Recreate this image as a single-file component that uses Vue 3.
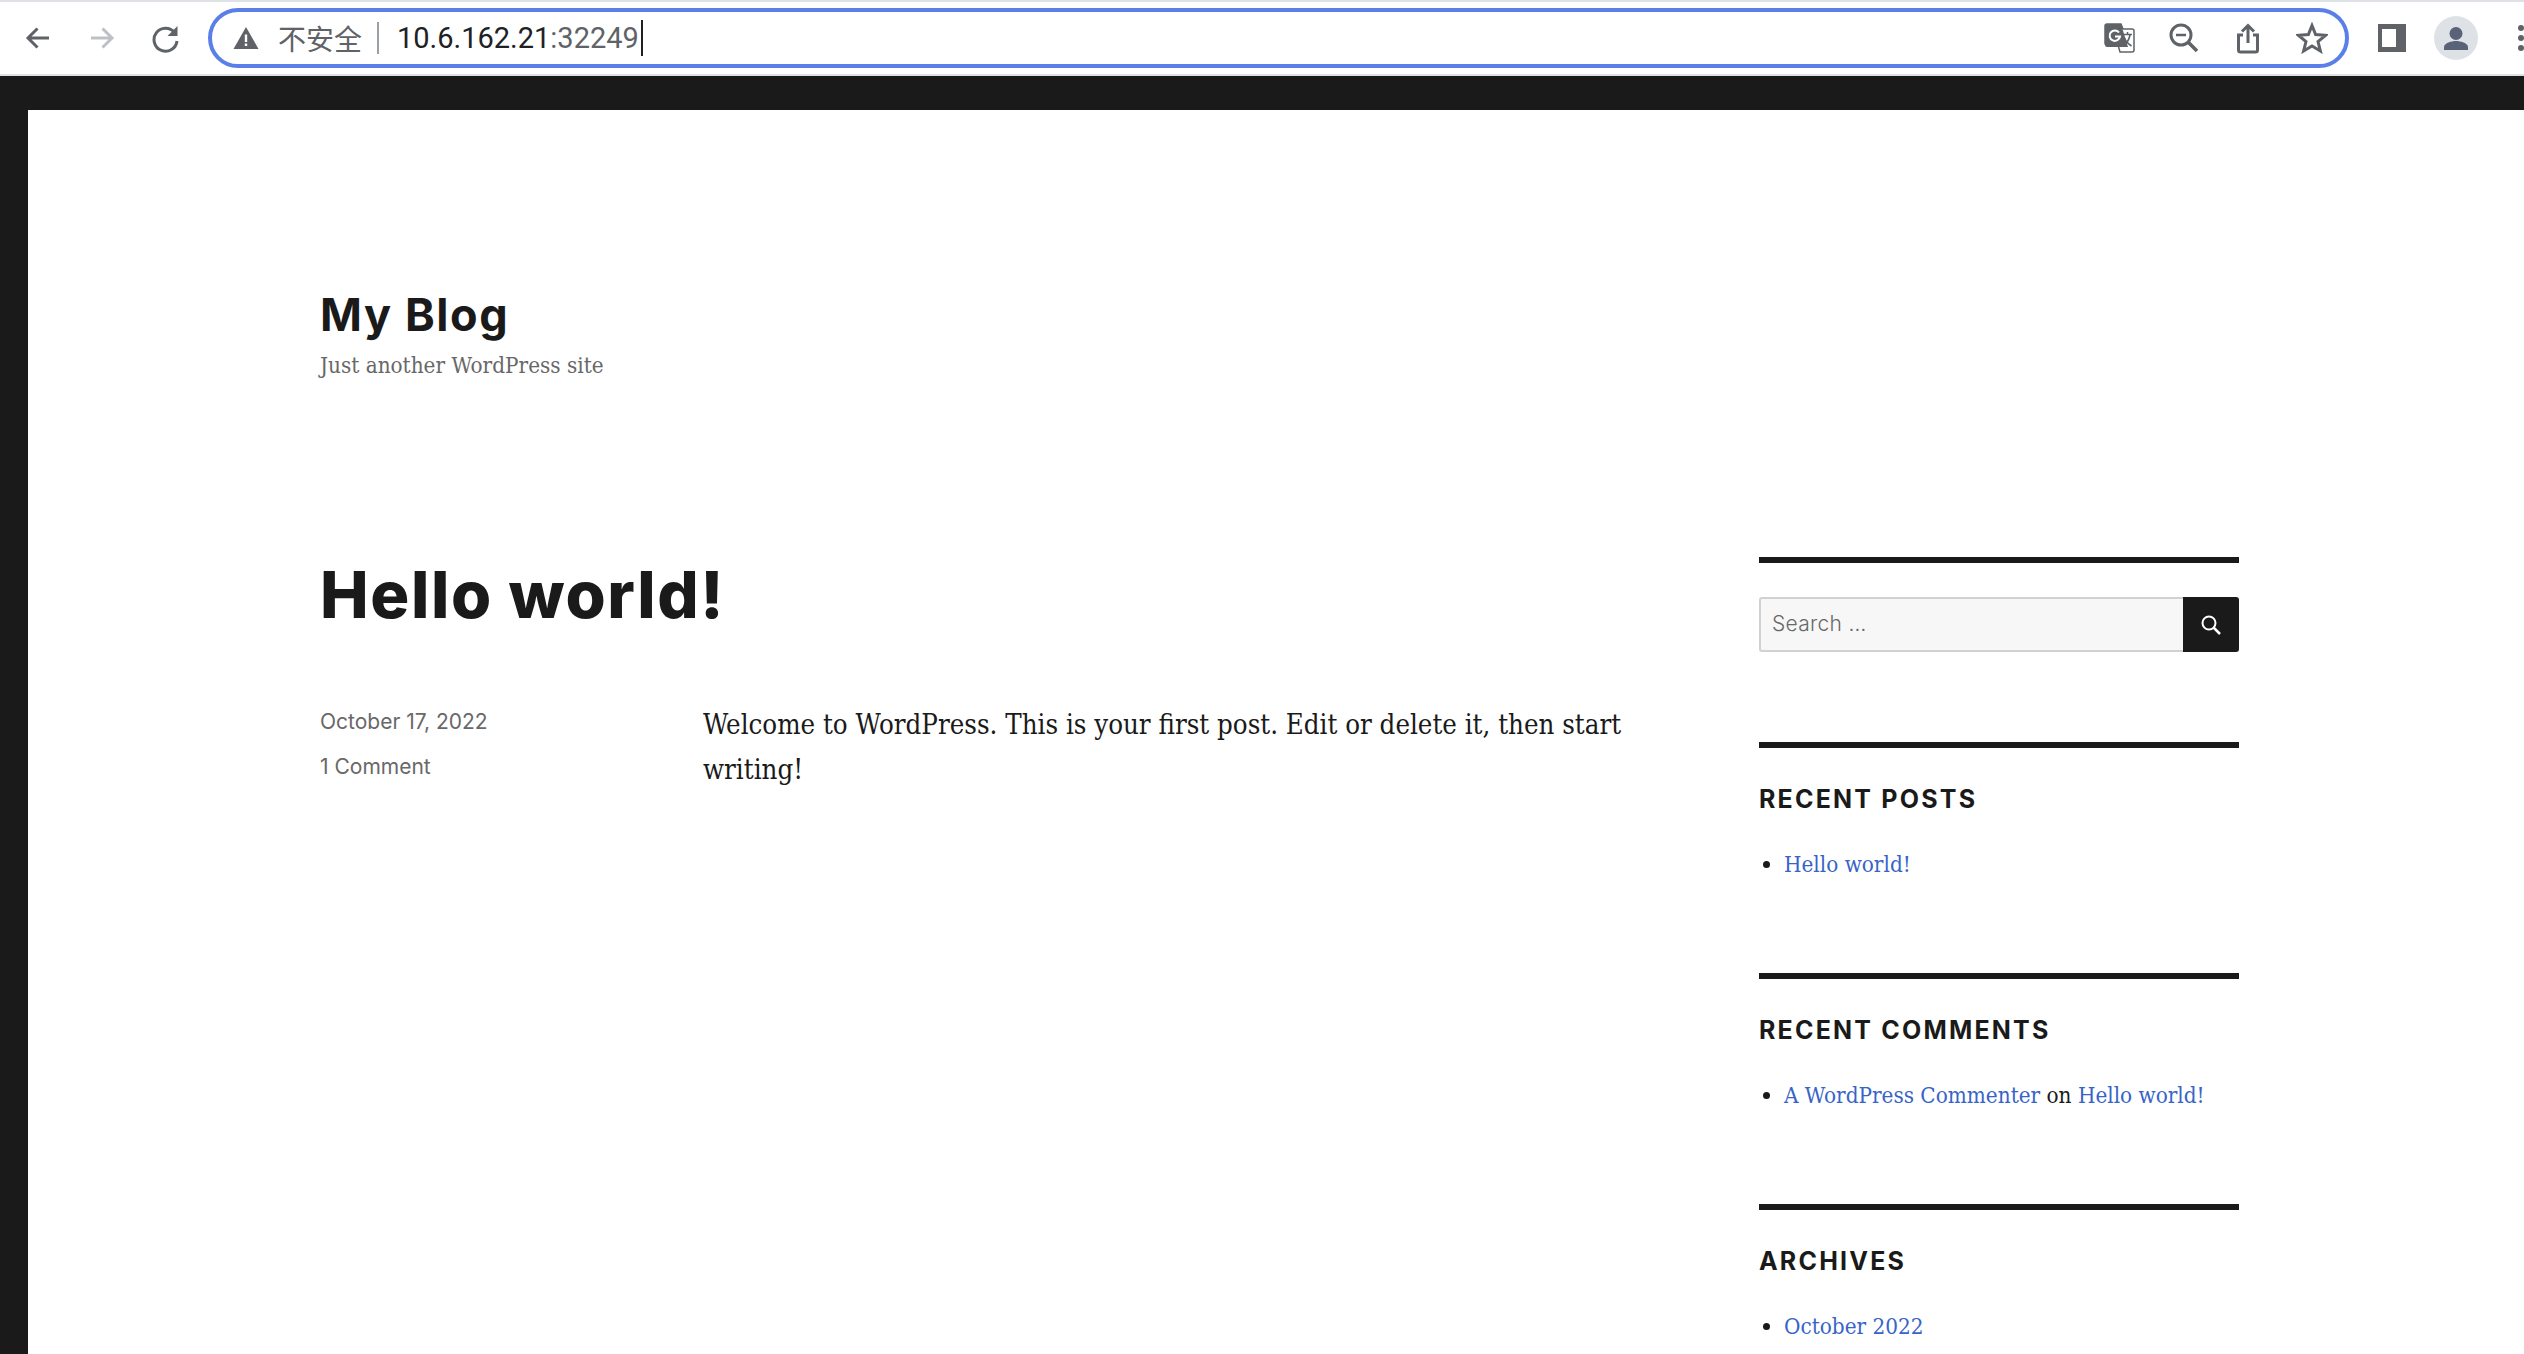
<template>
  <div class="page">
    <header class="toolbar">
      <button class="nav-btn">
        <svg viewBox="0 0 32 32" width="32" height="32"><path d="M27 16H7M15.500 6.500 6 16l9.500 9.500" fill="none" stroke="#5f6368" stroke-width="3"/></svg>
      </button>
      <button class="nav-btn">
        <svg viewBox="0 0 32 32" width="32" height="32"><path d="M5 16h20M16.500 6.500 26 16l-9.500 9.500" fill="none" stroke="#bdc1c6" stroke-width="3"/></svg>
      </button>
      <button class="nav-btn">
        <svg viewBox="0 0 32 32" width="32" height="32"><path d="M24.500 10.500A11.500 11.500 0 1 0 27 19" fill="none" stroke="#5f6368" stroke-width="3"/><path d="M27.500 4v10h-10z" fill="#5f6368"/></svg>
      </button>
      <div class="omnibox">
        <svg class="warn" viewBox="0 0 26 24" width="26" height="24"><path d="M13 1 25.500 23H.5z" fill="#5f6368"/><path d="M11.800 8.500h2.400v7.500h-2.400zM11.800 17.500h2.400v2.500h-2.400z" fill="#fff"/></svg>
        <span class="insecure">不安全</span>
        <span class="divider"></span>
        <span class="url">10.6.162.21<span class="port">:32249</span></span>
        <span class="caret"></span>
        <div class="omni-icons">
          <svg viewBox="0 0 32 32" width="32" height="32">
            <path d="M3 2h14l2 5h9a2 2 0 0 1 2 2v19a2 2 0 0 1-2 2H16l-2-7H3a2 2 0 0 1-2-2V4a2 2 0 0 1 2-2z" fill="#fff" stroke="#5f6368" stroke-width="1.500"/>
            <path d="M3 2h14l7 23H3a2 2 0 0 1-2-2V4a2 2 0 0 1 2-2z" fill="#5f6368"/>
            <path d="M15 10.500a5.200 5.200 0 1 0 1 4h-5" fill="none" stroke="#fff" stroke-width="2"/>
            <path d="M19 12.500h9M23.500 10v2.500M26 13c-1 5-4 9-7 11M20.500 16c1 3 4 6 7 8" fill="none" stroke="#5f6368" stroke-width="1.600"/>
          </svg>
          <svg viewBox="0 0 32 32" width="32" height="32"><circle cx="13" cy="13" r="10" fill="none" stroke="#5f6368" stroke-width="3"/><path d="M8 13h10" stroke="#5f6368" stroke-width="2.500"/><path d="M20.500 20.500 29 29" stroke="#5f6368" stroke-width="3.500"/></svg>
          <svg viewBox="0 0 32 32" width="32" height="32"><path d="M16 21V4M10 9.500 16 3.500l6 6" fill="none" stroke="#5f6368" stroke-width="3"/><path d="M11 13H6.500v15a2 2 0 0 0 2 2h15a2 2 0 0 0 2-2V13H21" fill="none" stroke="#5f6368" stroke-width="3"/></svg>
          <svg viewBox="0 0 32 32" width="32" height="32"><path d="M16 3.500 19.600 12.500 29.500 13.300 22 19.600 24.400 29 16 24 7.600 29 10 19.600 2.500 13.300 12.400 12.500z" fill="none" stroke="#5f6368" stroke-width="3" stroke-linejoin="miter"/></svg>
        </div>
      </div>
      <span class="side-panel"></span>
      <span class="avatar">
        <svg viewBox="0 0 44 44" width="44" height="44"><circle cx="22" cy="17.500" r="6.500" fill="#5a6278"/><path d="M10 34v-3c0-4 8-6 12-6s12 2 12 6v3z" fill="#5a6278"/></svg>
      </span>
      <span class="kebab"><i></i><i></i><i></i></span>
    </header>

    <div class="frame">
      <div class="site">
        <div class="branding">
          <h1 class="site-title">My Blog</h1>
          <p class="tagline">Just another WordPress site</p>
        </div>

        <div class="columns">
          <main class="content">
            <h2 class="post-title">Hello world!</h2>
            <div class="post-row">
              <div class="meta">
                <div>October 17, 2022</div>
                <div>1 Comment</div>
              </div>
              <p class="post-body">Welcome to WordPress. This is your first post. Edit or delete it, then start writing!</p>
            </div>
          </main>

          <aside class="sidebar">
            <section class="widget search-widget">
              <form class="search" @submit.prevent>
                <div class="search-input">Search …</div>
                <button class="search-btn">
                  <svg viewBox="0 0 22 22" width="22" height="22"><circle cx="9" cy="9" r="6.500" fill="none" stroke="#fff" stroke-width="2"/><path d="M13.500 13.500 20 20" stroke="#fff" stroke-width="2.500"/></svg>
                </button>
              </form>
            </section>

            <section class="widget" v-for="w in widgets" :key="w.title">
              <h3 class="widget-title">{{ w.title }}</h3>
              <ul>
                <li v-for="(item, i) in w.items" :key="i">
                  <template v-for="(part, j) in item" :key="j">
                    <a v-if="part.link">{{ part.text }}</a>
                    <span v-else>{{ part.text }}</span>
                  </template>
                </li>
              </ul>
            </section>
          </aside>
        </div>
      </div>
    </div>
  </div>
</template>

<script setup>
const widgets = [
  { title: 'RECENT POSTS', items: [[{ text: 'Hello world!', link: true }]] },
  {
    title: 'RECENT COMMENTS',
    items: [[
      { text: 'A WordPress Commenter', link: true },
      { text: ' on ' },
      { text: 'Hello world!', link: true }
    ]]
  },
  { title: 'ARCHIVES', items: [[{ text: 'October 2022', link: true }]] }
]
</script>

<style>
html, body {
  margin: 0;
  height: 100%;
  overflow: hidden;
  background: #1a1a1a;
}
</style>

<style scoped>
* { box-sizing: border-box; }

.page {
  width: 2524px;
  height: 1354px;
  overflow: hidden;
  font-family: Inter, sans-serif;
  display: flex;
  flex-direction: column;
}

/* Browser chrome */
.toolbar {
  height: 76px;
  flex: none;
  background: #fff;
  border-top: 2px solid #dee1e6;
  border-bottom: 2px solid #dee1e6;
  display: flex;
  align-items: center;
  padding-left: 18px;
  gap: 24px;
  overflow: hidden;
}

.nav-btn {
  width: 40px;
  height: 40px;
  border: none;
  background: none;
  padding: 0;
  display: flex;
  align-items: center;
  justify-content: center;
}

.omnibox {
  width: 2141px;
  height: 60px;
  margin-left: -2px;
  flex: none;
  border: 4px solid #5a7fe8;
  border-radius: 30px;
  display: flex;
  align-items: center;
  padding-left: 21px;
}

.warn { flex: none; }

.insecure {
  margin-left: 19px;
  font: 28px "Noto Sans CJK SC", sans-serif;
  color: #5f6368;
}

.divider {
  width: 2px;
  height: 32px;
  background: #9aa0a6;
  margin: 0 18px 0 15px;
}

.url {
  font: 29px Roboto, sans-serif;
  color: #202124;
}

.port { color: #5f6368; }

.caret {
  width: 2px;
  height: 36px;
  background: #202124;
  margin-left: 2px;
}

.omni-icons {
  margin-left: auto;
  margin-right: 17px;
  display: flex;
  gap: 32px;
}

.side-panel {
  width: 28px;
  height: 28px;
  flex: none;
  margin-left: 5px;
  border: solid #5f6368;
  border-width: 5px 10px 5px 4px;
}

.avatar {
  width: 44px;
  height: 44px;
  flex: none;
  border-radius: 50%;
  background: #dee1e6;
  margin-left: 4px;
}

.avatar svg { display: block; }

.kebab {
  display: flex;
  flex-direction: column;
  gap: 4px;
  margin-left: 16px;
}

.kebab i {
  display: block;
  width: 6px;
  height: 6px;
  border-radius: 50%;
  background: #5f6368;
}

/* WordPress page */
.frame {
  flex: 1;
  min-height: 0;
  background: #1a1a1a;
  padding: 34px 0 0 28px;
}

.site {
  height: 100%;
  background: #fff;
  padding: 177px 285px 0 292px;
  color: #1a1a1a;
}

.branding { height: 263px; }

.site-title {
  margin: 0;
  font: 700 45px/56px Inter, sans-serif;
  letter-spacing: 1.600px;
}

.tagline {
  margin: 7px 0 0;
  font: 22.300px/30px "DejaVu Serif Condensed", "DejaVu Serif", serif;
  color: #686868;
}

.columns {
  display: flex;
  justify-content: space-between;
}

.content { width: 1325px; }

.post-title {
  margin: 0;
  font: 800 65px/90px Inter, sans-serif;
  letter-spacing: 1.600px;
}

.post-row {
  display: flex;
  margin-top: 62px;
}

.meta {
  width: 383px;
  flex: none;
  margin-top: -3px;
  font-size: 21px;
  line-height: 45px;
  color: #686868;
}

.post-body {
  margin: 0;
  font: 27.400px/45px "DejaVu Serif Condensed", "DejaVu Serif", serif;
}

.sidebar { width: 480px; margin-top: 7px; }

.widget {
  border-top: 6px solid #1a1a1a;
  padding-top: 33px;
  height: 231px;
}

.search-widget { height: 185px; padding-top: 34px; }

.search {
  display: flex;
  height: 55px;
}

.search-input {
  flex: 1;
  background: #f7f7f7;
  border: 2px solid #d1d1d1;
  border-right: none;
  border-radius: 3px 0 0 3px;
  padding-left: 11px;
  font-size: 21px;
  font-weight: 300;
  line-height: 50px;
  letter-spacing: 0.300px;
  color: #686868;
}

.search-btn {
  width: 56px;
  flex: none;
  background: #1a1a1a;
  border: none;
  border-radius: 0 3px 3px 0;
  padding: 0;
  display: flex;
  align-items: center;
  justify-content: center;
}

.widget-title {
  margin: 0;
  font: 700 25px/36px Inter, sans-serif;
  letter-spacing: 2.200px;
}

ul {
  margin: 29px 0 0;
  padding: 0 0 0 25px;
  font: 22.300px/36px "DejaVu Serif Condensed", "DejaVu Serif", serif;
}

a { color: #3764c8; }
</style>
